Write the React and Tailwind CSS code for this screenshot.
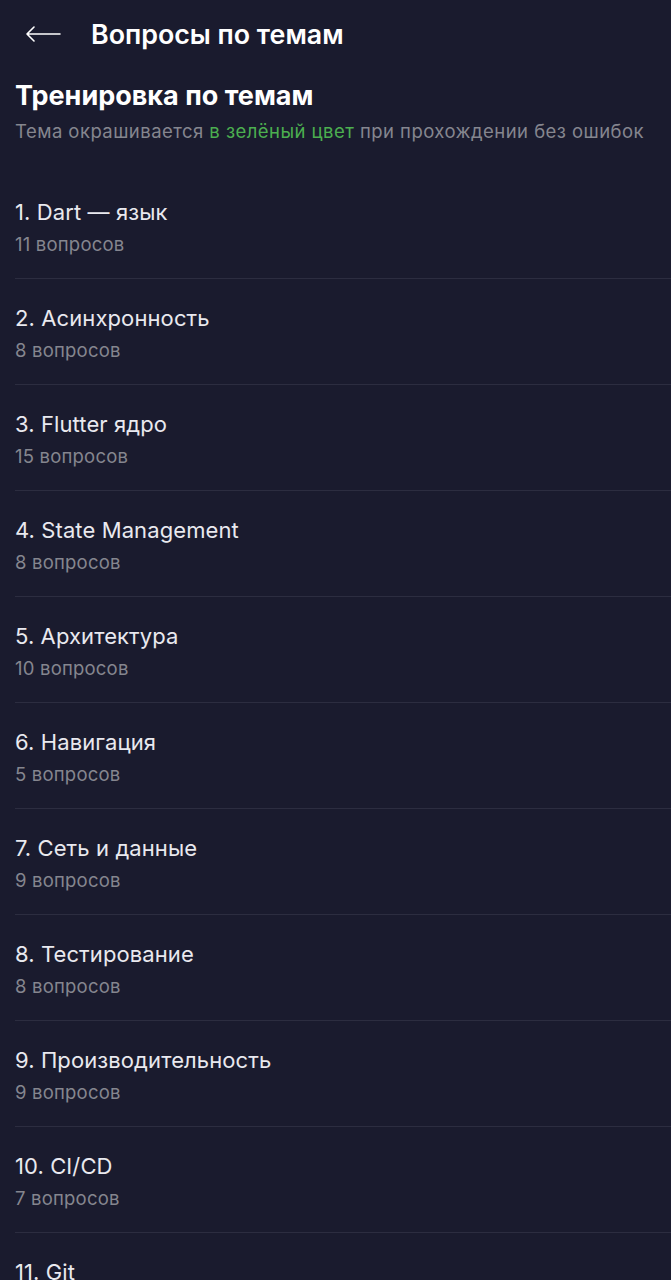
// App.jsx
const topics = [
  { title: '1. Dart — язык', count: '11 вопросов' },
  { title: '2. Асинхронность', count: '8 вопросов' },
  { title: '3. Flutter ядро', count: '15 вопросов' },
  { title: '4. State Management', count: '8 вопросов' },
  { title: '5. Архитектура', count: '10 вопросов' },
  { title: '6. Навигация', count: '5 вопросов' },
  { title: '7. Сеть и данные', count: '9 вопросов' },
  { title: '8. Тестирование', count: '8 вопросов' },
  { title: '9. Производительность', count: '9 вопросов' },
  { title: '10. CI/CD', count: '7 вопросов' },
  { title: '11. Git', count: '6 вопросов' },
]

export default function App() {
  return (
    <div
      className="min-h-screen w-full bg-[#1a1b2e] text-white overflow-hidden"
      style={{ fontFamily: 'Inter, "Noto Sans", sans-serif' }}
    >
      {/* Top bar */}
      <div className="flex items-center h-[68px] pl-[26px]">
        <button className="flex items-center">
          <svg width="35" height="16" viewBox="0 0 35 16" fill="none">
            <path
              d="M1 8H34M1 8L8 1M1 8L8 15"
              stroke="#ffffff"
              strokeWidth="1.6"
              strokeLinecap="round"
              strokeLinejoin="round"
            />
          </svg>
        </button>
        <h1 className="ml-[30px] text-[26.8px] font-semibold leading-none">
          Вопросы по темам
        </h1>
      </div>

      {/* Header */}
      <div className="px-[15px] pt-[12px]">
        <h2 className="text-[27px] font-bold leading-[32px]">Тренировка по темам</h2>
        <p className="mt-[7px] text-[18.5px] leading-[24px] tracking-[0.45px] text-[#85868f] whitespace-nowrap">
          Тема окрашивается <span className="text-[#4caf50]">в зелёный цвет</span> при
          прохождении без ошибок
        </p>
      </div>

      {/* Topics */}
      <div className="mt-[30px] pl-[15px]">
        {topics.map((t, i) => (
          <div key={i} className="pt-[25px] pb-[22px] border-b border-[#2c2d40]">
            <p className="text-[22px] leading-[28px] tracking-[0.1px] text-[#e9e9ef]">{t.title}</p>
            <p className="mt-[6px] text-[18.5px] leading-[24px] tracking-[0.2px] text-[#85868f]">
              {t.count}
            </p>
          </div>
        ))}
      </div>
    </div>
  )
}
